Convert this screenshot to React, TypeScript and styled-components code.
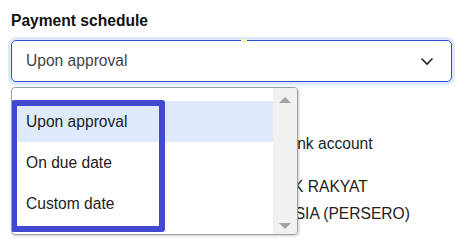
import React from "react";
import styled, { createGlobalStyle } from "styled-components";

const GlobalStyle = createGlobalStyle`
  html, body {
    margin: 0;
    padding: 0;
    background: #ffffff;
    font-family: "Liberation Sans", Arial, sans-serif;
    overflow: hidden;
  }
`;

const Page = styled.div`
  position: relative;
  width: 462px;
  height: 240px;
  padding: 12px 10px 0 11px;
  box-sizing: border-box;
`;

const Label = styled.div`
  font-size: 15.6px;
  font-weight: bold;
  color: #111;
  line-height: 18px;
  margin-bottom: 10px;
`;

const SelectBox = styled.div`
  position: relative;
  height: 42px;
  box-sizing: border-box;
  border: 1px solid #2c4fce;
  border-radius: 5px;
  box-shadow: 0 0 0 3px #dfe9fc;
  display: flex;
  align-items: center;
  justify-content: space-between;
  padding: 0 14px 0 14px;
  font-size: 15.6px;
  color: #444;
`;

const Marker = styled.span`
  position: absolute;
  top: -2px;
  left: 229px;
  width: 6px;
  height: 3px;
  background: #fff5a6;
`;

const Chevron = styled.svg`
  width: 16px;
  height: 16px;
  margin-right: 2px;
`;

const Below = styled.div`
  padding: 53px 0 0 226px;
  font-size: 15.6px;
  color: #222;
  line-height: 18px;
  white-space: nowrap;
`;

const BelowLine = styled.div<{ gap: number; shift?: number }>`
  margin-top: ${(p) => p.gap}px;
  margin-left: ${(p) => p.shift ?? 0}px;
`;

const Dropdown = styled.div`
  position: absolute;
  left: 11px;
  top: 87px;
  width: 287px;
  height: 148px;
  box-sizing: border-box;
  border: 1px solid #9aa0a6;
  border-radius: 4px;
  background: #fff;
  box-shadow: 1px 1px 3px rgba(0, 0, 0, 0.2);
  display: flex;
  overflow: hidden;
`;

const Options = styled.div`
  flex: 1;
  padding-top: 13px;
  position: relative;
`;

const Option = styled.div<{ active?: boolean }>`
  height: 41px;
  display: flex;
  align-items: center;
  padding-left: 14px;
  font-size: 15.6px;
  color: #222;
  background: ${(p) => (p.active ? "#dfebfd" : "transparent")};
`;

const Highlight = styled.div`
  position: absolute;
  left: -1px;
  top: 12px;
  width: 154px;
  height: 132px;
  box-sizing: border-box;
  border: 6px solid #4349cf;
  border-radius: 3px;
  pointer-events: none;
`;

const Scrollbar = styled.div`
  width: 24px;
  background: #f1f1f1;
  display: flex;
  flex-direction: column;
  justify-content: space-between;
  align-items: center;
  padding: 9px 0 5px;
`;

const Arrow = styled.div<{ down?: boolean }>`
  width: 0;
  height: 0;
  border-left: 6px solid transparent;
  border-right: 6px solid transparent;
  ${(p) =>
    p.down
      ? "border-top: 6px solid #a3a3a3;"
      : "border-bottom: 6px solid #a3a3a3;"}
`;

export default function App(): React.JSX.Element {
  return (
    <>
      <GlobalStyle />
      <Page>
        <Label>Payment schedule</Label>
        <SelectBox>
          <Marker />
          <span>Upon approval</span>
          <Chevron viewBox="0 0 16 16" fill="none" stroke="#222" strokeWidth={1.6}>
            <path d="M2.5 5.5 L8 11 L13.5 5.5" />
          </Chevron>
        </SelectBox>
        <Below>
          <BelowLine gap={0} shift={7}>Your bank account</BelowLine>
          <BelowLine gap={25}>PT BANK RAKYAT</BelowLine>
          <BelowLine gap={9} shift={-3}>INDONESIA (PERSERO)</BelowLine>
        </Below>
        <Dropdown>
          <Options>
            <Option active>Upon approval</Option>
            <Option>On due date</Option>
            <Option>Custom date</Option>
            <Highlight />
          </Options>
          <Scrollbar>
            <Arrow />
            <Arrow down />
          </Scrollbar>
        </Dropdown>
      </Page>
    </>
  );
}
